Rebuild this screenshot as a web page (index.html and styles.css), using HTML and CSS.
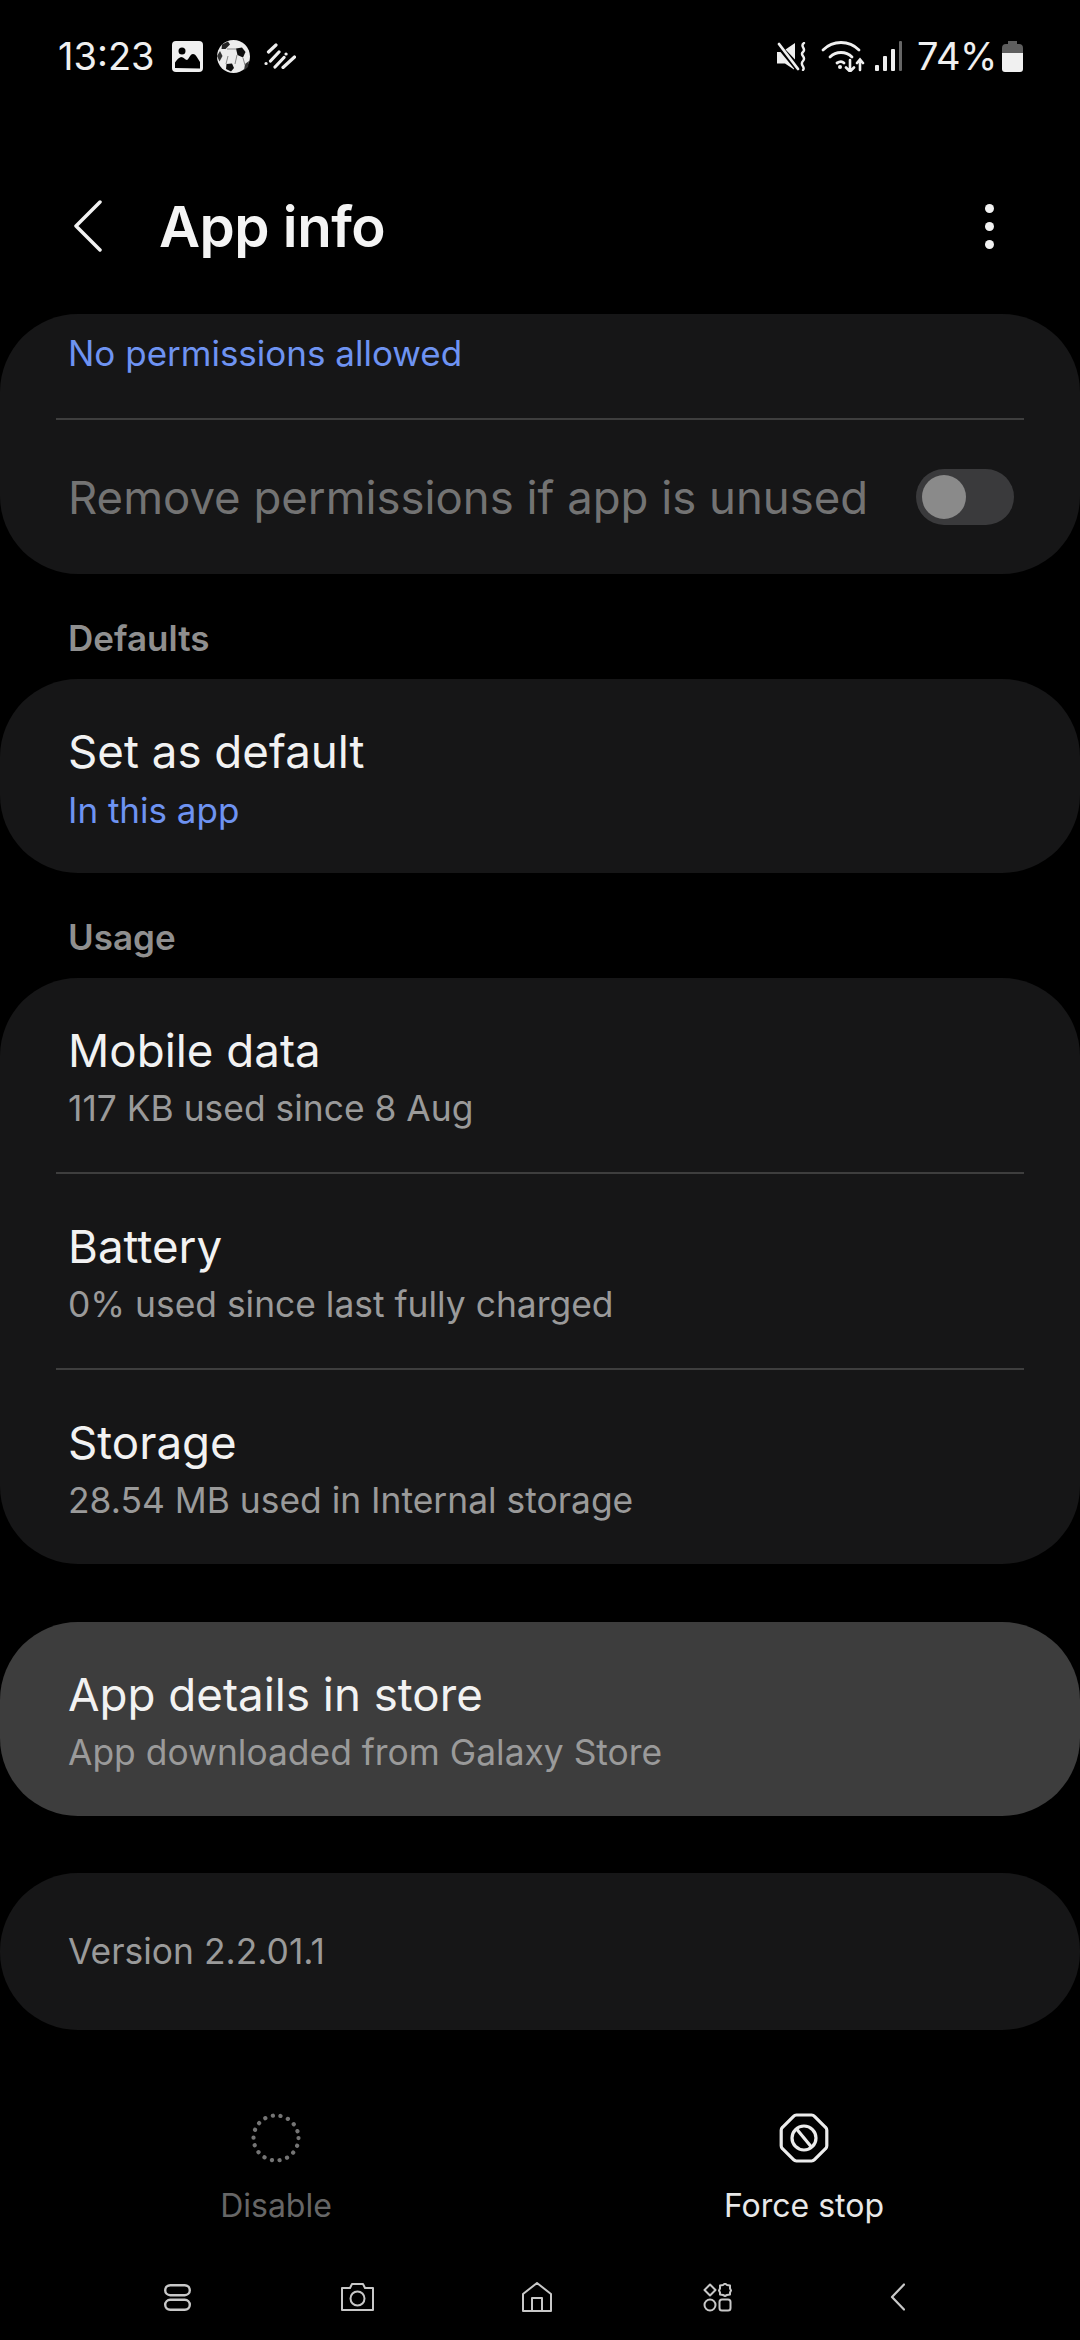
FILE: index.html
```html
<!DOCTYPE html>
<html lang="en">
<head>
<meta charset="utf-8">
<title>App info</title>
<link rel="stylesheet" href="styles.css">
</head>
<body>
<div class="phone">
  <div class="status">
    <div class="status-left">
      <span class="time">13:23</span>
      <svg class="si-gallery" viewBox="0 0 31 31"><rect width="31" height="31" rx="4" fill="#f0f0f0"/><circle cx="10" cy="10" r="3.500" fill="#000"/><path d="M3 27v-5.500c2-3 4-5 6-5.500 3 0 4 3 6 3 2-1 3-6 6-6 3 0 5 5 7 8v6.500z" fill="#000"/></svg>
      <svg class="si-ball" viewBox="0 0 33 33"><circle cx="16.500" cy="16.500" r="16.500" fill="#ececec"/><path d="M19 8.500l6 -1 3.500 4.500-2.500 5.500-5.500-2.500z" fill="#0c0c0c"/><path d="M5 4.500l6-3 2 3-4.500 4.500-4 0z" fill="#222"/><path d="M9.500 24l5.500-.5 2 4.500-3 3.500-5-2.500z" fill="#0c0c0c"/><path d="M0 16l3-5 2.500 5-3 5.500z" fill="#333"/><path d="M28 24l4-3-1 6-4 3.500z" fill="#333"/><path d="M10 9l9 0M11 16l-2 8M20 15l-2 9M26 18l2 7" stroke="#888" stroke-width="1"/></svg>
      <svg class="si-dash" viewBox="0 0 32 26" fill="none" stroke="#eee" stroke-width="3.200" stroke-linecap="round"><path d="M12 2L4.500 9M15 9l-8.500 9M20 14.500L11 24M30.500 14L19 24.500M2 20.500h.1M22 11h.1"/></svg>
    </div>
    <div class="status-right">
      <svg class="si-mute" viewBox="0 0 30 29"><path d="M0 10h3.500L17 26.500v1L8 21.500H0z" fill="#efefef"/><path d="M8.500 7.500L18 1v16.500z" fill="#efefef"/><path d="M2 2l19 25" stroke="#efefef" stroke-width="2.800" stroke-linecap="round"/><path d="M27 1c-5 3 3 6-1 9s4 5 0 9 3 6 0 9" stroke="#efefef" stroke-width="2.400" fill="none" stroke-linecap="round"/></svg>
      <svg class="si-wifi" viewBox="0 0 44 32" fill="none" stroke="#f0f0f0" stroke-width="2.800" stroke-linecap="round"><path d="M2 10c10-10 26-10 36 0M9 17c6-6 16-6 22 0M16 23c3-2 5-2 7 0" stroke-linecap="round"/><circle cx="19" cy="27" r="2" fill="#f0f0f0" stroke="none"/><path d="M29 20v11M25 27.500l4 4 4-4M39 30V20M36 23l3-3.500 3 3.500" stroke-width="2.600"/></svg>
      <svg class="si-signal" viewBox="0 0 27 30"><rect x="0" y="24" width="4" height="6" rx="1" fill="#eee"/><rect x="8" y="15" width="4" height="15" rx="1" fill="#eee"/><rect x="16" y="8" width="4" height="22" rx="1" fill="#eee"/><rect x="24" y="0" width="3" height="30" rx="1" fill="#666"/></svg>
      <span class="pct">74%</span>
      <svg class="si-batt" viewBox="0 0 21 31"><path d="M6 0h9v3h2a4 4 0 0 1 4 4v6H0V7a4 4 0 0 1 4-4h2z" fill="#5e5e5e"/><path d="M0 12h21v16a3 3 0 0 1-3 3H3a3 3 0 0 1-3-3z" fill="#f0f0f0"/></svg>
    </div>
  </div>

  <header class="appbar">
    <svg class="back" viewBox="0 0 28 52" fill="none" stroke="#f2f2f2" stroke-width="3.500" stroke-linecap="round" stroke-linejoin="round"><path d="M26 2L2 26l24 24"/></svg>
    <h1 class="title">App info</h1>
    <div class="more"><i></i><i></i><i></i></div>
  </header>

  <main class="content">
    <section class="card card-perm">
      <div class="perm-top"><span class="link">No permissions allowed</span></div>
      <div class="divider"></div>
      <div class="perm-row">
        <span class="perm-label">Remove permissions if app is unused</span>
        <span class="toggle"><span class="knob"></span></span>
      </div>
    </section>

    <h2 class="section-label">Defaults</h2>
    <section class="card">
      <div class="row">
        <div class="row-title">Set as default</div>
        <div class="link">In this app</div>
      </div>
    </section>

    <h2 class="section-label">Usage</h2>
    <section class="card">
      <div class="row">
        <div class="row-title">Mobile data</div>
        <div class="row-sub">117 KB used since 8 Aug</div>
      </div>
      <div class="divider"></div>
      <div class="row">
        <div class="row-title">Battery</div>
        <div class="row-sub">0% used since last fully charged</div>
      </div>
      <div class="divider"></div>
      <div class="row">
        <div class="row-title">Storage</div>
        <div class="row-sub">28.54 MB used in Internal storage</div>
      </div>
    </section>

    <section class="card card-active">
      <div class="row">
        <div class="row-title">App details in store</div>
        <div class="row-sub">App downloaded from Galaxy Store</div>
      </div>
    </section>

    <section class="card card-version">
      <span class="row-sub">Version 2.2.01.1</span>
    </section>
  </main>

  <div class="actions">
    <div class="action action-off">
      <svg class="action-icon" viewBox="0 0 50 50" fill="none" stroke="#757575" stroke-width="4.200" stroke-linecap="round" stroke-dasharray="0.100 7.750"><circle cx="25" cy="25" r="22.500"/></svg>
      <span>Disable</span>
    </div>
    <div class="action">
      <svg class="action-icon" viewBox="0 0 50 50" fill="none" stroke="#ececec" stroke-width="3.200"><path d="M17.500 2h15a4 4 0 0 1 3 1.300l11 11a4 4 0 0 1 1.300 3v15.400a4 4 0 0 1-1.300 3l-11 11a4 4 0 0 1-3 1.300h-15a4 4 0 0 1-3-1.300l-11-11a4 4 0 0 1-1.300-3V17.300a4 4 0 0 1 1.300-3l11-11a4 4 0 0 1 3-1.300z"/><circle cx="25" cy="25" r="12"/><path d="M18 16.500l14 17"/></svg>
      <span>Force stop</span>
    </div>
  </div>

  <nav class="navbar">
    <svg class="nav-recents" viewBox="0 0 27 27" fill="none" stroke="#c8c8c8" stroke-width="2.400"><rect x="1.200" y="1.200" width="24.600" height="10" rx="5"/><rect x="1.200" y="15.800" width="24.600" height="10" rx="5"/></svg>
    <svg class="nav-camera" viewBox="0 0 33 28" fill="none" stroke="#c8c8c8" stroke-width="2"><path d="M1 5h8l2-4h11l2 4h8v22H1z" stroke-linejoin="round"/><circle cx="16.500" cy="15.500" r="7"/></svg>
    <svg class="nav-home" viewBox="0 0 30 30" fill="none" stroke="#c8c8c8" stroke-width="2"><path d="M1 29V12L15 1l14 11v17zM10 29V16h10v13" stroke-linejoin="round"/></svg>
    <svg class="nav-apps" viewBox="0 0 29 29" fill="none" stroke="#c8c8c8" stroke-width="2"><path d="M7 1.500l5.500 5.500L7 12.500 1.500 7z" stroke-linejoin="round"/><path d="M22 1l2 1.500 3 .5v3l1 2-1 2v2l-3 .5-2 1-2-1-3-.5v-2l-1-2 1-2V3l3-.5z" stroke-linejoin="round" transform="translate(0 -.5)"/><circle cx="7" cy="22" r="5.500"/><rect x="16.500" y="16.500" width="11" height="11" rx="2.500"/></svg>
    <svg class="nav-back" viewBox="0 0 15 28" fill="none" stroke="#c8c8c8" stroke-width="2.200" stroke-linecap="round" stroke-linejoin="round"><path d="M14 1.500L2 14l12 12.500"/></svg>
  </nav>
</div>
</body>
</html>
```
FILE: styles.css
```css
* { box-sizing: border-box; }
html, body { margin: 0; padding: 0; background: #000; }
.phone {
  width: 1080px; height: 2340px; background: #000; overflow: hidden;
  display: flex; flex-direction: column;
  font-family: Inter, "Noto Sans", sans-serif; color: #f2f2f2;
}
.status {
  height: 56px; margin-top: 28px; padding: 0 57px 0 58px;
  display: flex; justify-content: space-between; align-items: center;
}
.status-left, .status-right { display: flex; align-items: center; }
.time { font-size: 38px; line-height: 46px; color: #f0f0f0; margin-right: 17px; }
.si-gallery { width: 31px; height: 31px; margin-right: 14px; }
.si-ball { width: 33px; height: 33px; margin-right: 14px; }
.si-dash { width: 32px; height: 26px; }
.si-mute { width: 30px; height: 29px; margin-right: 14px; }
.si-wifi { width: 44px; height: 32px; margin-right: 10px; }
.si-signal { width: 27px; height: 30px; margin-right: 15px; }
.pct { font-size: 38px; line-height: 46px; letter-spacing: -0.4px; color: #f0f0f0; margin-right: 5px; }
.si-batt { width: 21px; height: 31px; }

.appbar { height: 124px; margin-top: 80px; padding: 0 0 0 74px; display: flex; align-items: center; }
.back { width: 28px; height: 52px; flex: none; }
.title { margin: 0 0 0 57px; font-size: 56.500px; font-weight: 600; letter-spacing: -0.5px; color: #f4f4f4; }
.more { margin-left: auto; margin-right: 86px; display: flex; flex-direction: column; gap: 9px; }
.more i { display: block; width: 9px; height: 9px; border-radius: 50%; background: #f2f2f2; }

.content { margin-top: 26px; display: flex; flex-direction: column; }
.card { background: #161617; border-radius: 78px; }
.card-perm { height: 260px; }
.perm-top { height: 104px; padding: 0 68px 26px; display: flex; align-items: center; }
.divider { height: 2px; margin: 0 56px; background: #3e3e3e; }
.perm-row { height: 154px; padding: 0 66px 0 68px; display: flex; align-items: center; justify-content: space-between; }
.perm-label { font-size: 45.500px; color: #737373; }
.toggle { width: 98px; height: 56px; border-radius: 28px; background: #3a3a3c; padding: 6px; display: block; }
.knob { display: block; width: 44px; height: 44px; border-radius: 50%; background: #8a8a8a; }

.link { font-size: 35px; line-height: 42px; color: #6e93f2; }
.section-label { margin: 0; height: 105px; padding: 43px 68px 0; font-size: 35px; font-weight: 600; color: #8f8f8f; }

.row { height: 194px; padding: 4px 68px 0; display: flex; flex-direction: column; justify-content: center; gap: 10px; }
.row-title { font-size: 45.700px; line-height: 54px; color: #f2f2f2; }
.row-sub { font-size: 35.400px; line-height: 42px; color: #9a9a9a; }
.card-active { margin-top: 58px; background: #3d3d3d; }
.card-version { margin-top: 57px; height: 157px; padding: 0 68px; display: flex; align-items: center; }

.actions { flex: 1; display: flex; justify-content: space-between; padding: 83px 12px 0; }
.action { width: 528px; display: flex; flex-direction: column; align-items: center; gap: 23px; font-size: 32px; color: #e8e8e8; }
.action-off { color: #666; }
.action-icon { width: 50px; height: 50px; }

.navbar { height: 86px; padding: 0 0 0 87px; display: grid; grid-template-columns: repeat(5, 180px); justify-items: center; align-items: center; }
.nav-recents { width: 27px; height: 27px; }
.nav-camera { width: 33px; height: 28px; }
.nav-home { width: 30px; height: 30px; }
.nav-apps { width: 29px; height: 29px; }
.nav-back { width: 15px; height: 28px; }
```
